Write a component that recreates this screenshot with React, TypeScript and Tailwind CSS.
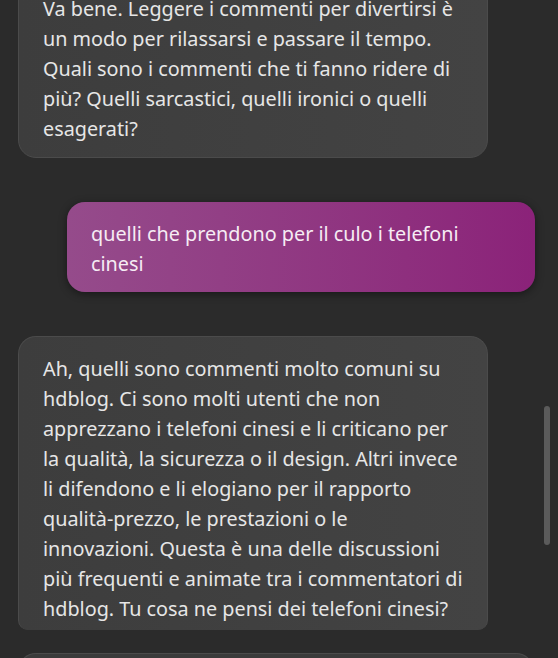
import React from "react";

const botFirst = [
  "Va bene. Leggere i commenti per divertirsi è",
  "un modo per rilassarsi e passare il tempo.",
  "Quali sono i commenti che ti fanno ridere di",
  "più? Quelli sarcastici, quelli ironici o quelli",
  "esagerati?",
];

const userMsg = ["quelli che prendono per il culo i telefoni", "cinesi"];

const botSecond = [
  "Ah, quelli sono commenti molto comuni su",
  "hdblog. Ci sono molti utenti che non",
  "apprezzano i telefoni cinesi e li criticano per",
  "la qualità, la sicurezza o il design. Altri invece",
  "li difendono e li elogiano per il rapporto",
  "qualità-prezzo, le prestazioni o le",
  "innovazioni. Questa è una delle discussioni",
  "più frequenti e animate tra i commentatori di",
  "hdblog. Tu cosa ne pensi dei telefoni cinesi?",
];

function Lines({ lines }: { lines: string[] }) {
  return (
    <>
      {lines.map((line, i) => (
        <span key={i} className="block whitespace-nowrap">
          {line}
        </span>
      ))}
    </>
  );
}

export default function App() {
  return (
    <div
      className="relative h-[658px] w-[558px] overflow-hidden bg-[#2b2b2b] text-[19.8px] leading-[30px] text-[#e6e6e6]"
      style={{ fontFamily: '"Noto Sans", "Open Sans", sans-serif' }}
    >
      <div className="-mt-[24px] flex flex-col pl-[18px]">
        <div className="w-[470px] rounded-[18px] border border-[#4b4b4b] bg-gradient-to-r from-[#3d3d3d] to-[#434343] px-6 pt-[17px] pb-[13px]">
          <Lines lines={botFirst} />
        </div>

        <div className="mt-[44px] ml-[49px] w-[468px] rounded-[18px] bg-gradient-to-r from-[#954b8b] to-[#8b2279] px-6 pt-[17px] pb-[13px] text-[#f6ecf4] shadow-[0_2px_8px_rgba(0,0,0,0.45)]">
          <Lines lines={userMsg} />
        </div>

        <div className="mt-[44px] w-[470px] rounded-t-[18px] rounded-b-[10px] border border-b-0 border-[#4b4b4b] bg-gradient-to-r from-[#3d3d3d] to-[#434343] px-6 pt-[17px] pb-[6px]">
          <Lines lines={botSecond} />
        </div>

        <div className="mt-[23px] h-[40px] w-[516px] rounded-t-[18px] border border-b-0 border-[#4b4b4b] bg-[#3b3b3b]" />
      </div>

      <div className="absolute top-[406px] left-[544px] h-[139px] w-[6px] rounded-full bg-[#5b5b5b]" />
    </div>
  );
}
